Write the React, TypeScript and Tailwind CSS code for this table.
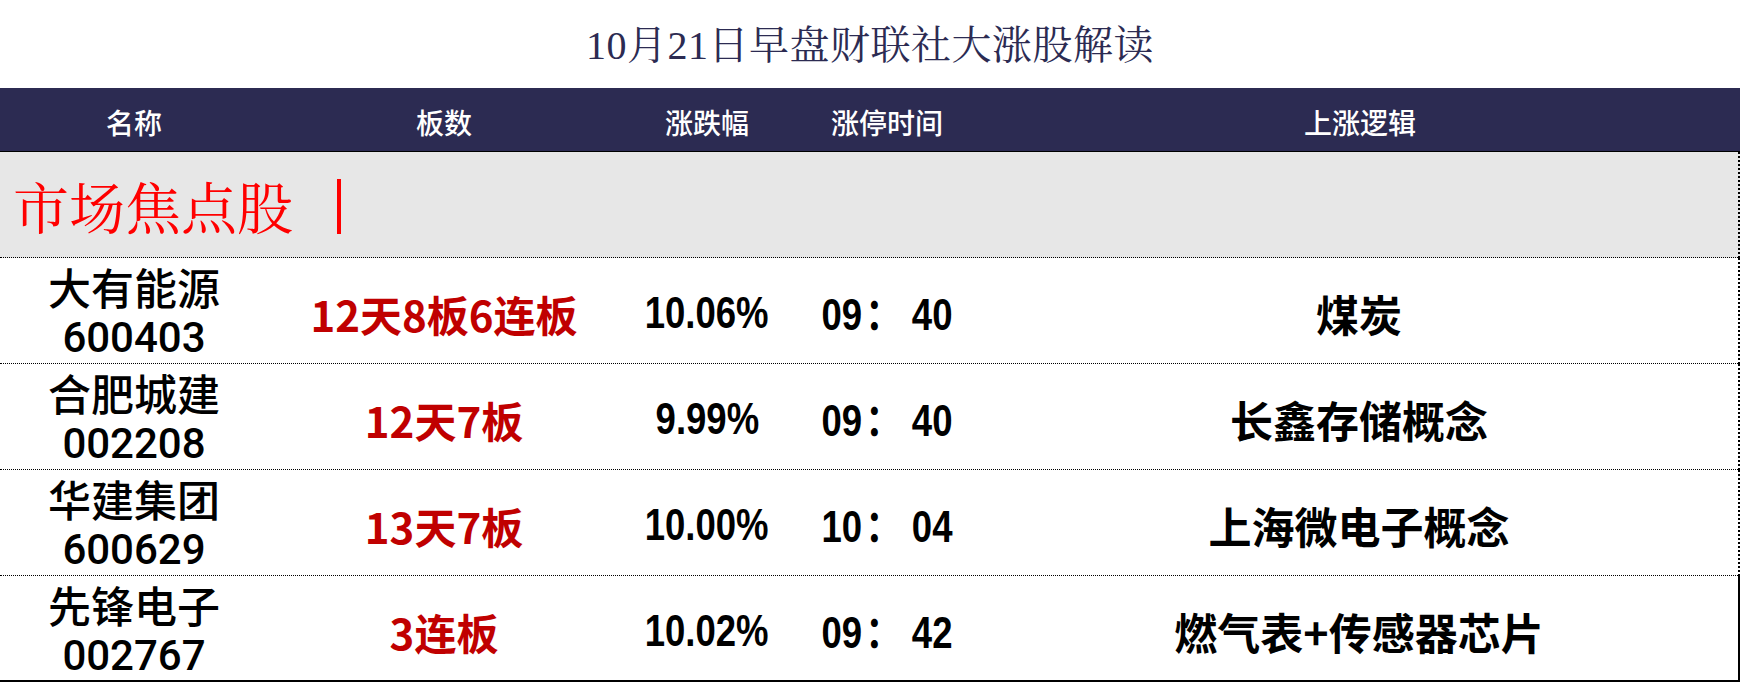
const rows = [
  { name: "大有能源", code: "600403", boards: "12天8板6连板", pct: "10.06%", time: ["09", "40"], logic: "煤炭" },
  { name: "合肥城建", code: "002208", boards: "12天7板", pct: "9.99%", time: ["09", "40"], logic: "长鑫存储概念" },
  { name: "华建集团", code: "600629", boards: "13天7板", pct: "10.00%", time: ["10", "04"], logic: "上海微电子概念" },
  { name: "先锋电子", code: "002767", boards: "3连板", pct: "10.02%", time: ["09", "42"], logic: "燃气表+传感器芯片" },
];

const cols = "grid grid-cols-[268px_352px_174px_186px_1fr]";
const cjk = "font-['Noto_Sans_CJK_SC',sans-serif]";
// no narrow face installed, so the Arial-Narrow look is squeezed by hand
const narrow = "inline-block scale-x-[0.83] font-['Liberation_Sans','Noto_Sans_CJK_SC',sans-serif]";

function Header() {
  const labels = ["名称", "板数", "涨跌幅", "涨停时间", "上涨逻辑"];
  return (
    <div className={`${cols} h-[64px] border-b border-black bg-[#2c2b52] text-[28px] font-medium text-white ${cjk}`}>
      {labels.map((l) => (
        <div key={l} className="flex items-center justify-center pt-1">
          {l}
        </div>
      ))}
    </div>
  );
}

function StockRow({ row, last }: { row: (typeof rows)[number]; last: boolean }) {
  return (
    <div
      className={`${cols} h-[106px] border-r-2 border-black ${
        last ? "border-b-2 border-b-black" : "border-b border-dotted border-b-black"
      }`}
    >
      <div className="flex flex-col items-center justify-start pt-[2px] text-black">
        <span className={`text-[43px] leading-[52px] font-medium ${cjk}`}>{row.name}</span>
        <span className="font-['Roboto','Liberation_Sans',sans-serif] text-[42px] leading-[52px] font-medium">
          {row.code}
        </span>
      </div>
      <div className={`flex items-center justify-center pt-1 text-[42px] font-bold text-[#c00000] ${cjk}`}>
        {row.boards}
      </div>
      <div className="flex items-center justify-center pt-1 text-black">
        <span className={`text-[44px] font-bold ${narrow}`}>{row.pct}</span>
      </div>
      <div className="flex items-center justify-center pt-1 text-black">
        <span className={`text-[44px] font-bold ${narrow}`}>
          {row.time[0]}
          <span className={`${cjk} ml-1 mr-3`}>：</span>
          {row.time[1]}
        </span>
      </div>
      <div className={`flex items-center justify-center pt-1 text-[43px] font-bold text-black ${cjk}`}>
        {row.logic}
      </div>
    </div>
  );
}

export default function App() {
  return (
    <div className="h-[682px] w-[1740px] overflow-hidden bg-white">
      <div className="flex h-[88px] items-center justify-center pt-1 font-['Liberation_Serif','Noto_Serif_CJK_SC','Noto_Sans_CJK_SC',serif] text-[40px] tracking-[0.5px] text-[#2c2b52]">
        10月21日早盘财联社大涨股解读
      </div>
      <Header />
      <div className="flex h-[106px] items-center border-r-2 border-b border-dotted border-r-black border-b-black bg-[#e7e7e7] pl-[13px] font-['Noto_Serif_CJK_SC','Noto_Sans_CJK_SC',serif] text-[56px] text-[#ff0000]">
        <span>市场焦点股</span>
        <span className="ml-[44px] mt-1 inline-block h-[55px] w-[4px] bg-[#ff0000]" />
      </div>
      {rows.map((r, i) => (
        <StockRow key={r.code} row={r} last={i === rows.length - 1} />
      ))}
    </div>
  );
}
